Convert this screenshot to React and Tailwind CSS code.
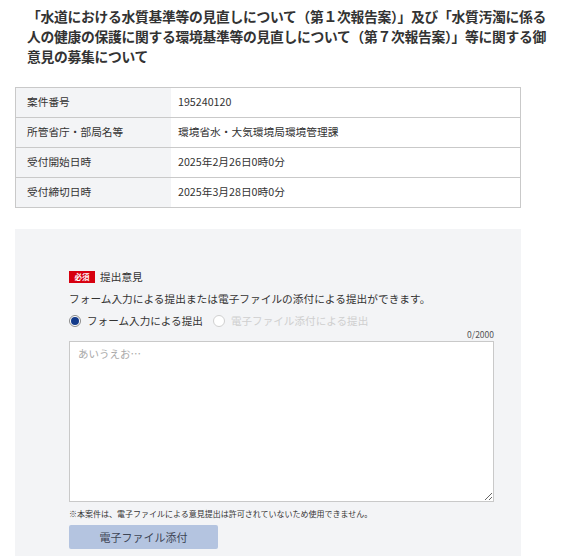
import React from "react";

const rows = [
  ["案件番号", "195240120"],
  ["所管省庁・部局名等", "環境省水・大気環境局環境管理課"],
  ["受付開始日時", "2025年2月26日0時0分"],
  ["受付締切日時", "2025年3月28日0時0分"],
];

export default function App() {
  return (
    <div
      className="w-[567px] h-[556px] overflow-hidden bg-white text-[#333]"
      style={{ fontFamily: '"Noto Sans CJK JP", "Noto Sans", sans-serif' }}
    >
      <h1 className="pl-[27px] pt-[6px] w-[550px] text-[13.8px] leading-[20px] font-bold tracking-[-0.3px] text-[#333]">
        「水道における水質基準等の見直しについて（第１次報告案）」及び「水質汚濁に係る人の健康の保護に関する環境基準等の見直しについて（第７次報告案）」等に関する御意見の募集について
      </h1>

      <div className="ml-[15px] mt-[21px] w-[506px] border border-[#c9c9c9] flex flex-col">
        {rows.map(([k, v], i) => (
          <div
            key={k}
            className={
              "flex " + (i < rows.length - 1 ? "h-[30px] border-b border-[#c9c9c9]" : "h-[29px]")
            }
          >
            <div className="w-[155px] bg-[#f3f4f6] pl-[11px] flex items-center text-[10.7px] text-[#333]">
              {k}
            </div>
            <div className="flex-1 bg-white pl-[7px] flex items-center text-[10.7px] text-[#333]">
              {v}
            </div>
          </div>
        ))}
      </div>

      <div className="ml-[15px] mt-[21px] w-[506px] h-[400px] bg-[#f3f4f6] pt-[42px] pl-[54px]">
        <div className="w-[425px] flex flex-col">
          <div className="flex items-center h-[12px]">
            <span className="w-[26px] h-[12px] bg-[#d7000f] text-white text-[7.5px] font-bold flex items-center justify-center leading-none">
              必須
            </span>
            <span className="ml-[5px] text-[10.7px] leading-[14px] text-[#333]">提出意見</span>
          </div>
          <div className="mt-[9px] h-[14px] text-[10.7px] leading-[14px] text-[#333]">
            フォーム入力による提出または電子ファイルの添付による提出ができます。
          </div>
          <div className="mt-[8px] h-[14px] flex items-center">
            <span className="w-[12px] h-[12px] rounded-full border border-[#8a8a8a] bg-white flex items-center justify-center">
              <span className="w-[8px] h-[8px] rounded-full bg-[#133a8a]" />
            </span>
            <span className="ml-[6px] text-[10.6px] leading-[14px] text-[#333]">フォーム入力による提出</span>
            <span className="ml-[10px] w-[12px] h-[12px] rounded-full border border-[#d0d0d0] bg-white" />
            <span className="ml-[6px] text-[10.6px] leading-[14px] text-[#cfcfcf]">電子ファイル添付による提出</span>
          </div>
          <div className="mt-[1px] h-[11px] text-right text-[8.5px] leading-[11px] text-[#555]">0/2000</div>
          <textarea
            className="mt-[1px] w-[425px] h-[161px] border border-[#c9c9c9] bg-white px-[8px] py-[5px] text-[10.5px] leading-[14px] text-[#333] placeholder:text-[#a9a9a9] outline-none"
            placeholder="あいうえお…"
          />
          <div className="mt-[7px] h-[10px] text-[8px] leading-[10px] text-[#333]">
            ※本案件は、電子ファイルによる意見提出は許可されていないため使用できません。
          </div>
          <button
            disabled
            className="mt-[6px] w-[149px] h-[24px] rounded-[2px] bg-[#b4c4e0] text-[#3d4555] text-[11px] flex items-center justify-center"
          >
            電子ファイル添付
          </button>
        </div>
      </div>
    </div>
  );
}
